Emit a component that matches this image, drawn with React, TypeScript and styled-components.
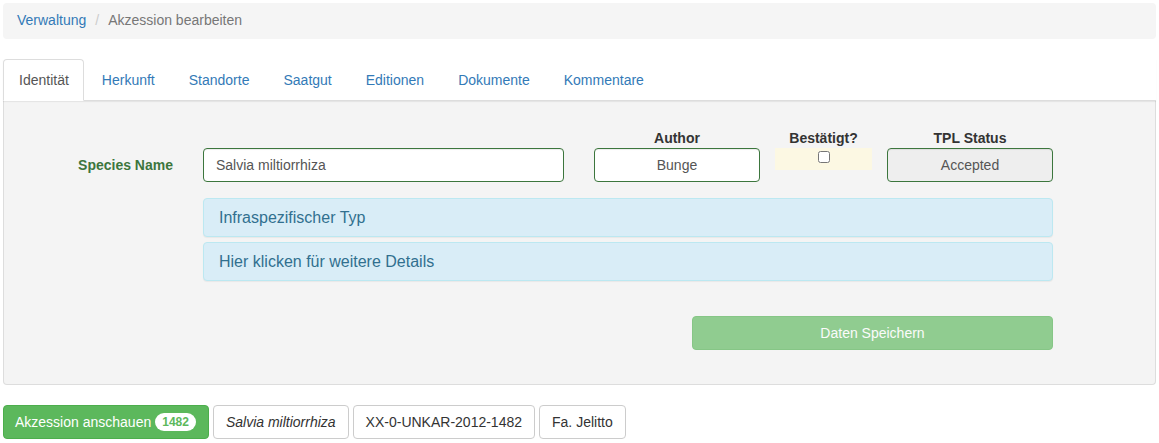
import React from "react";
import styled, { createGlobalStyle } from "styled-components";

const Global = createGlobalStyle`
  * { box-sizing: border-box; }
  body {
    margin: 0;
    background: #fff;
    font-family: "Liberation Sans", Arial, Helvetica, sans-serif;
    font-size: 14px;
    line-height: 1.42857;
    color: #333;
  }
`;

const Page = styled.div`
  padding: 3px;
  width: 1159px;
`;

const Breadcrumb = styled.ol`
  list-style: none;
  margin: 0 0 20px;
  padding: 8px 14px;
  height: 36px;
  background: #f5f5f5;
  border-radius: 4px;
  display: flex;
  align-items: center;
`;

const Crumb = styled.li<{ $active?: boolean }>`
  color: ${(p) => (p.$active ? "#777" : "#337ab7")};
`;

const CrumbSep = styled.li`
  color: #ccc;
  padding: 0 9px 0 9px;
`;

const Tabs = styled.ul`
  list-style: none;
  margin: 0;
  padding: 0;
  display: flex;
  border-bottom: 1px solid #ddd;
  box-shadow: 0 1px 1px rgba(0, 0, 0, 0.06);
  position: relative;
  z-index: 1;
`;

const Tab = styled.li<{ $active?: boolean }>`
  margin-right: 2px;
  margin-bottom: -1px;
  padding: ${(p) => (p.$active ? "10px 14px 10px 14px" : "10px 15px")};
  padding-left: 15px;
  line-height: 20px;
  border: 1px solid ${(p) => (p.$active ? "#ddd" : "transparent")};
  border-bottom-color: ${(p) => (p.$active ? "#fff" : "transparent")};
  border-radius: 4px 4px 0 0;
  background: ${(p) => (p.$active ? "#fff" : "transparent")};
  color: ${(p) => (p.$active ? "#555" : "#337ab7")};
`;

const Panel = styled.div`
  background: #f4f4f4;
  border: 1px solid #ddd;
  border-top: 0;
  border-radius: 0 0 4px 4px;
  padding: 27px 0 34px 0;
  display: grid;
  grid-template-columns: 199px 850px;
`;

const LabelCell = styled.div`
  display: flex;
  align-items: flex-end;
  justify-content: flex-end;
  padding-right: 30px;
  padding-bottom: 6px;
  font-weight: bold;
  color: #3c763d;
`;

const FieldRow = styled.div`
  display: flex;
  gap: 15px;
`;

const Field = styled.div<{ $w: number; $extra?: number }>`
  width: ${(p) => p.$w}px;
  margin-right: ${(p) => p.$extra ?? 0}px;
  display: flex;
  flex-direction: column;
  align-items: stretch;
`;

const FieldHead = styled.div`
  height: 20px;
  line-height: 20px;
  text-align: center;
  font-weight: bold;
  color: #333;
`;

const Input = styled.div<{ $center?: boolean; $readonly?: boolean }>`
  height: 34px;
  padding: 6px 12px;
  border: 1px solid #3c763d;
  border-radius: 4px;
  background: ${(p) => (p.$readonly ? "#eee" : "#fff")};
  color: #555;
  line-height: 20px;
  text-align: ${(p) => (p.$center ? "center" : "left")};
  box-shadow: inset 0 1px 1px rgba(0, 0, 0, 0.075);
`;

const CheckBox = styled.div`
  height: 22px;
  background: #fcf8e3;
  display: flex;
  justify-content: center;
  padding-top: 3px;
  input {
    margin: 0;
    width: 12px;
    height: 12px;
  }
`;

const Spacer = styled.div``;

const InfoStack = styled.div`
  grid-column: 2;
  display: flex;
  flex-direction: column;
  gap: 5px;
  margin-top: 16px;
`;

const InfoHeading = styled.div`
  background: #d9edf7;
  border: 1px solid #bce8f1;
  border-radius: 4px;
  color: #31708f;
  font-size: 16px;
  line-height: 17px;
  height: 39px;
  padding: 10px 15px;
  box-shadow: 0 1px 1px rgba(0, 0, 0, 0.05);
`;

const SaveRow = styled.div`
  grid-column: 2;
  display: flex;
  justify-content: flex-end;
  margin-top: 35px;
`;

const SaveButton = styled.div`
  width: 361px;
  height: 34px;
  line-height: 20px;
  padding: 6px 12px;
  text-align: center;
  color: #fff;
  background: #5cb85c;
  border: 1px solid #4cae4c;
  border-radius: 4px;
  opacity: 0.65;
`;

const Actions = styled.div`
  display: flex;
  gap: 4px;
  margin-top: 20px;
`;

const Btn = styled.div<{ $success?: boolean; $italic?: boolean }>`
  height: 34px;
  padding: ${(p) => (p.$success ? "6px 12px 6px 11px" : "6px 12px")};
  line-height: 20px;
  border-radius: 4px;
  border: 1px solid ${(p) => (p.$success ? "#4cae4c" : "#ccc")};
  background: ${(p) => (p.$success ? "#5cb85c" : "#fff")};
  color: ${(p) => (p.$success ? "#fff" : "#333")};
  font-style: ${(p) => (p.$italic ? "italic" : "normal")};
  display: flex;
  align-items: center;
  gap: 4px;
  white-space: nowrap;
`;

const Badge = styled.span`
  display: inline-block;
  background: #fff;
  color: #5cb85c;
  font-size: 12px;
  font-weight: bold;
  line-height: 1;
  padding: 3px 7px;
  border-radius: 10px;
`;

export default function App() {
  return (
    <Page>
      <Global />
      <Breadcrumb>
        <Crumb>Verwaltung</Crumb>
        <CrumbSep>/</CrumbSep>
        <Crumb $active>Akzession bearbeiten</Crumb>
      </Breadcrumb>
      <Tabs>
        <Tab $active>Identität</Tab>
        <Tab>Herkunft</Tab>
        <Tab>Standorte</Tab>
        <Tab>Saatgut</Tab>
        <Tab>Editionen</Tab>
        <Tab>Dokumente</Tab>
        <Tab>Kommentare</Tab>
      </Tabs>
      <Panel>
        <LabelCell>Species Name</LabelCell>
        <FieldRow>
          <Field $w={361} $extra={15}>
            <FieldHead />
            <Input>Salvia miltiorrhiza</Input>
          </Field>
          <Field $w={166}>
            <FieldHead>Author</FieldHead>
            <Input $center>Bunge</Input>
          </Field>
          <Field $w={97}>
            <FieldHead>Bestätigt?</FieldHead>
            <CheckBox>
              <input type="checkbox" readOnly />
            </CheckBox>
          </Field>
          <Field $w={166}>
            <FieldHead>TPL Status</FieldHead>
            <Input $center $readonly>Accepted</Input>
          </Field>
        </FieldRow>
        <Spacer />
        <InfoStack>
          <InfoHeading>Infraspezifischer Typ</InfoHeading>
          <InfoHeading>Hier klicken für weitere Details</InfoHeading>
        </InfoStack>
        <SaveRow>
          <SaveButton>Daten Speichern</SaveButton>
        </SaveRow>
      </Panel>
      <Actions>
        <Btn $success>
          Akzession anschauen <Badge>1482</Badge>
        </Btn>
        <Btn $italic>Salvia miltiorrhiza</Btn>
        <Btn>XX-0-UNKAR-2012-1482</Btn>
        <Btn>Fa. Jelitto</Btn>
      </Actions>
    </Page>
  );
}
